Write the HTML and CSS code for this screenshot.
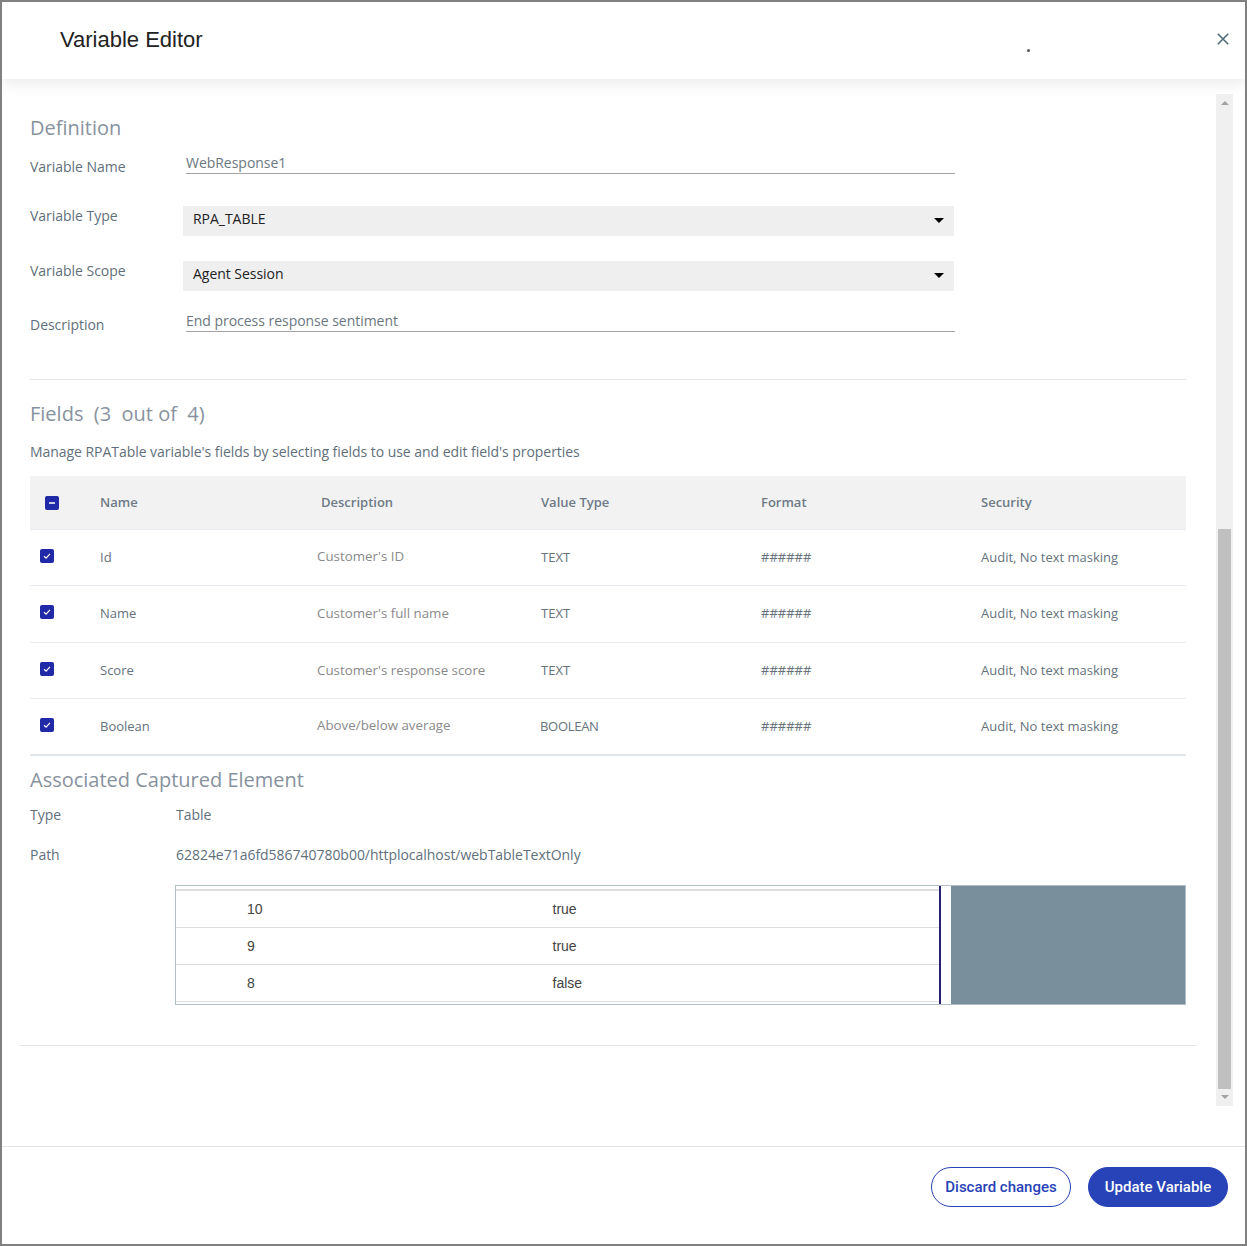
FILE: index.html
```html
<!DOCTYPE html>
<html lang="en">
  <head>
    <meta charset="UTF-8" />
    <title>Variable Editor</title>
    <link rel="stylesheet" href="styles.css">
  </head>
  <body>
    <div class="dialog">
      <header class="dialog-header">
        <h1>Variable Editor</h1>
        <span class="speck"></span>
        <button class="close" aria-label="Close">
          <svg width="12" height="12" viewBox="0 0 12 12"><path d="M.8.8l10.4 10.4M11.2.8L.8 11.2" stroke="#4f6b7a" stroke-width="1.6" fill="none"/></svg>
        </button>
      </header>

      <div class="dialog-main">
        <div class="content">
          <h2 class="section-title">Definition</h2>

          <div class="form-row first">
            <label class="offset">Variable Name</label>
            <div class="input">WebResponse1</div>
          </div>
          <div class="form-row type">
            <label>Variable Type</label>
            <div class="select">RPA_TABLE<span class="caret"></span></div>
          </div>
          <div class="form-row scope">
            <label>Variable Scope</label>
            <div class="select">Agent Session<span class="caret"></span></div>
          </div>
          <div class="form-row desc">
            <label class="offset">Description</label>
            <div class="input">End process response sentiment</div>
          </div>

          <hr class="rule" />

          <h2 class="section-title fields">Fields&nbsp; (3&nbsp; out of&nbsp; 4)</h2>
          <p class="hint">Manage RPATable variable's fields by selecting fields to use and edit field's properties</p>

          <table class="fields-table">
            <colgroup>
              <col class="c-check" /><col class="c-name" /><col class="c-desc" />
              <col class="c-value" /><col class="c-format" /><col class="c-security" />
            </colgroup>
            <thead>
              <tr>
                <th><span class="checkbox head"><span class="dash"></span></span></th>
                <th>Name</th>
                <th class="desc-head">Description</th>
                <th>Value Type</th>
                <th>Format</th>
                <th>Security</th>
              </tr>
            </thead>
            <tbody>
              <tr>
                <td><span class="checkbox"><svg width="10" height="10" viewBox="0 0 10 10"><path d="M2 5.2l2.1 2L8 2.8" stroke="#fff" stroke-width="1.2" fill="none"/></svg></span></td>
                <td>Id</td>
                <td class="muted">Customer's ID</td>
                <td>TEXT</td>
                <td>######</td>
                <td>Audit, No text masking</td>
              </tr>
              <tr>
                <td><span class="checkbox"><svg width="10" height="10" viewBox="0 0 10 10"><path d="M2 5.2l2.1 2L8 2.8" stroke="#fff" stroke-width="1.2" fill="none"/></svg></span></td>
                <td>Name</td>
                <td class="muted">Customer's full name</td>
                <td>TEXT</td>
                <td>######</td>
                <td>Audit, No text masking</td>
              </tr>
              <tr>
                <td><span class="checkbox"><svg width="10" height="10" viewBox="0 0 10 10"><path d="M2 5.2l2.1 2L8 2.8" stroke="#fff" stroke-width="1.2" fill="none"/></svg></span></td>
                <td>Score</td>
                <td class="muted">Customer's response score</td>
                <td>TEXT</td>
                <td>######</td>
                <td>Audit, No text masking</td>
              </tr>
              <tr>
                <td><span class="checkbox"><svg width="10" height="10" viewBox="0 0 10 10"><path d="M2 5.2l2.1 2L8 2.8" stroke="#fff" stroke-width="1.2" fill="none"/></svg></span></td>
                <td>Boolean</td>
                <td class="muted">Above/below average</td>
                <td class="bool">BOOLEAN</td>
                <td>######</td>
                <td>Audit, No text masking</td>
              </tr>
            </tbody>
          </table>

          <h2 class="section-title assoc">Associated Captured Element</h2>
          <div class="info-row type-row"><span class="info-label">Type</span><span>Table</span></div>
          <div class="info-row path-row"><span class="info-label">Path</span><span>62824e71a6fd586740780b00/httplocalhost/webTableTextOnly</span></div>

          <div class="preview">
            <div class="preview-table">
              <div class="preview-row"><span class="v1">10</span><span>true</span></div>
              <div class="preview-row"><span class="v1">9</span><span>true</span></div>
              <div class="preview-row"><span class="v1">8</span><span>false</span></div>
            </div>
            <div class="preview-gap"></div>
            <div class="preview-fill"></div>
          </div>

          <hr class="rule wide" />
        </div>

        <div class="scrollbar">
          <span class="arrow up"></span>
          <div class="scroll-space"></div>
          <div class="scroll-thumb"></div>
          <span class="arrow down"></span>
        </div>
      </div>

      <footer class="dialog-footer">
        <button class="btn outline">Discard changes</button>
        <button class="btn primary">Update Variable</button>
      </footer>
    </div>
  </body>
</html>
```

FILE: styles.css
```css
* {
  margin: 0;
  padding: 0;
  box-sizing: border-box;
}

body {
  background-color: white;
  font-family: "Open Sans", sans-serif;
  font-size: 14px;
  letter-spacing: -0.03px;
  color: #5f6f7c;
}

.dialog {
  width: 1247px;
  height: 1246px;
  border: 2px solid #808080;
  display: flex;
  flex-direction: column;
  overflow: hidden;
}

.dialog-header {
  position: relative;
  height: 77px;
  flex: none;
  display: flex;
  align-items: center;
  justify-content: space-between;
  padding: 0 16px 1px 58px;
  background-color: white;
  box-shadow: 0 4px 14px rgba(0, 0, 0, 0.09);
  z-index: 1;
}

.dialog-header h1 {
  font-family: "Liberation Sans", Arial, sans-serif;
  font-size: 22px;
  font-weight: 400;
  letter-spacing: 0;
  color: #222;
}

.speck {
  position: absolute;
  left: 1025px;
  top: 47px;
  width: 3px;
  height: 3px;
  border-radius: 50%;
  background-color: #555;
}

.close {
  border: none;
  background: none;
  display: flex;
  margin-bottom: 2px;
}

.dialog-main {
  flex: 1;
  display: flex;
  align-items: flex-start;
  padding-left: 28px;
}

.content {
  width: 1156px;
  flex: none;
  padding-top: 35px;
}

.section-title {
  font-size: 20px;
  font-weight: 400;
  line-height: 28px;
  letter-spacing: 0;
  color: #87929e;
}

.form-row {
  display: flex;
  align-items: flex-start;
  line-height: 20px;
}

.form-row.first {
  margin-top: 11px;
}

.form-row.type {
  margin-top: 29px;
}

.form-row.scope {
  margin-top: 25px;
}

.form-row.desc {
  margin-top: 20px;
}

.form-row label {
  width: 153px;
  flex: none;
}

.form-row label.offset {
  margin-top: 4px;
}

.input {
  width: 769px;
  margin-left: 3px;
  height: 21px;
  border-bottom: 1px solid #a3a3a3;
  color: #6b7780;
}

.select {
  width: 771px;
  height: 30px;
  padding: 0 10px 4px;
  background-color: #efefef;
  color: #222;
  display: flex;
  justify-content: space-between;
  align-items: center;
}

.caret {
  width: 0;
  height: 0;
  margin-top: 2px;
  border-left: 5px solid transparent;
  border-right: 5px solid transparent;
  border-top: 5px solid #000;
}

.rule {
  border: none;
  border-top: 1px solid #e6e6e6;
  margin-top: 44px;
}

.section-title.fields {
  margin-top: 20px;
}

.hint {
  line-height: 20px;
  margin-top: 14px;
  letter-spacing: -0.045px;
}

.fields-table {
  width: 1156px;
  margin-top: 14px;
  border-collapse: collapse;
  table-layout: fixed;
  font-size: 13px;
  letter-spacing: 0;
}

.c-check { width: 70px; }
.c-name { width: 217px; }
.c-desc { width: 224px; }
.c-value { width: 220px; }
.c-format { width: 220px; }
.c-security { width: 205px; }

.fields-table thead tr {
  height: 53px;
  background-color: #f2f2f3;
  border-bottom: 1px solid #e8ebef;
}

.fields-table th {
  text-align: left;
  font-weight: 600;
  color: #6f7a86;
  padding-bottom: 1px;
}

.fields-table th.desc-head {
  padding-left: 4px;
}

.fields-table tbody tr {
  height: 56px;
  border-bottom: 1px solid #e8ebef;
}

.fields-table tbody tr:nth-child(even) {
  height: 57px;
}

.fields-table tbody tr:last-child {
  border-bottom: 2px solid #e0e6ea;
}

.fields-table td {
  color: #66727d;
}

.fields-table tbody tr:nth-child(2) td {
  padding-bottom: 2px;
}

.fields-table td.muted {
  font-size: 13.33px;
  color: #8a8a8a;
  padding-bottom: 2px;
}

.fields-table tbody tr:nth-child(3) td.muted {
  padding-bottom: 0;
}

.fields-table td.bool {
  text-indent: -1px;
  letter-spacing: -0.3px;
}

.checkbox {
  width: 14px;
  height: 14px;
  margin: -3px 0 0 10px;
  display: flex;
  align-items: center;
  justify-content: center;
  border-radius: 2px;
  background-color: #2029a8;
}

.fields-table tbody tr:nth-child(2) .checkbox {
  margin-top: -1px;
}

.checkbox.head {
  margin: 2px 0 0 15px;
}

.dash {
  width: 6px;
  height: 2px;
  background-color: #c8cdf0;
}

.section-title.assoc {
  margin-top: 10px;
}

.info-row {
  display: flex;
  line-height: 20px;
}

.info-label {
  width: 146px;
  flex: none;
}

.type-row {
  margin-top: 11px;
}

.path-row {
  margin-top: 20px;
}

.preview {
  margin: 20px 0 0 145px;
  height: 120px;
  border: 1px solid #b3bfc7;
  display: flex;
  font-family: "Liberation Sans", Arial, sans-serif;
  letter-spacing: 0;
  color: #444;
}

.preview-table {
  width: 765px;
  flex: none;
  padding-top: 3px;
  border-right: 2px solid #2a2070;
}

.preview-table::before {
  content: "";
  display: block;
  height: 2px;
  background-color: #dedede;
}

.preview-row {
  height: 37px;
  display: flex;
  align-items: center;
  border-bottom: 1px solid #dcdfe2;
}

.v1 {
  width: 376.5px;
  padding-left: 71px;
  flex: none;
}

.preview-gap {
  width: 10px;
  flex: none;
}

.preview-fill {
  flex: 1;
  background-color: #7a8f9c;
}

.rule.wide {
  margin: 40px -10px 0;
}

.scrollbar {
  width: 17px;
  height: 1012px;
  margin: 15px 0 0 30px;
  flex: none;
  background-color: #f0f0f0;
  display: flex;
  flex-direction: column;
  align-items: center;
}

.arrow {
  width: 0;
  height: 0;
  border-left: 4px solid transparent;
  border-right: 4px solid transparent;
}

.arrow.up {
  margin-top: 7px;
  border-bottom: 4px solid #a3a3a3;
}

.arrow.down {
  margin-top: 6px;
  border-top: 4px solid #a3a3a3;
}

.scroll-space {
  height: 424px;
}

.scroll-thumb {
  width: 13px;
  height: 560px;
  background-color: #c0c0c0;
}

.dialog-footer {
  height: 98px;
  flex: none;
  border-top: 1px solid #e3e3e3;
  display: flex;
  justify-content: flex-end;
  gap: 17px;
  padding: 20px 17px 0 0;
}

.btn {
  width: 140px;
  height: 40px;
  border-radius: 20px;
  font-family: Roboto, sans-serif;
  font-size: 15px;
  font-weight: 500;
  border: 1px solid #2842b8;
}

.btn.outline {
  background-color: white;
  color: #2842b8;
}

.btn.primary {
  background-color: #2842b8;
  color: white;
}
```
